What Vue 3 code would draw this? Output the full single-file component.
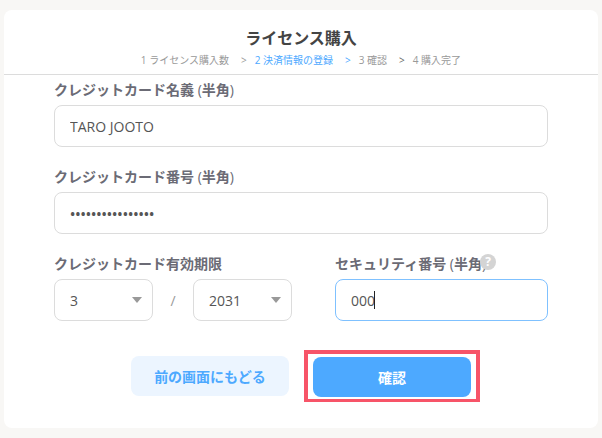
<script setup>
import { ref } from 'vue'

const steps = ['ライセンス購入数', '決済情報の登録', '確認', '購入完了']
const current = 1

const holder = ref('TARO JOOTO')
const number = ref('4242424242424242')
const month = ref('3')
const year = ref('2031')
const code = ref('000')

const months = Array.from({ length: 12 }, (_, i) => String(i + 1))
const years = Array.from({ length: 10 }, (_, i) => String(2024 + i))
</script>

<template>
  <main class="card">
    <header class="head">
      <h1 class="title">ライセンス購入</h1>
      <ol class="steps">
        <li
          v-for="(step, i) in steps"
          :key="step"
          class="step"
          :class="{ active: i === current }"
        >
          <span>{{ i + 1 }} {{ step }}</span>
          <span v-if="i < steps.length - 1" :class="{ last: i === 2 }">&gt;</span>
        </li>
      </ol>
    </header>

    <form class="form" @submit.prevent>
      <div class="field">
        <label class="label" for="holder">クレジットカード名義<span class="paren"> (</span>半角<span class="paren">)</span></label>
        <input id="holder" v-model="holder" class="control" type="text" />
      </div>

      <div class="field">
        <label class="label" for="number">クレジットカード番号<span class="paren"> (</span>半角<span class="paren">)</span></label>
        <input id="number" v-model="number" class="control masked" type="password" autocomplete="off" />
      </div>

      <div class="columns">
        <div class="field expiry">
          <label class="label" for="month">クレジットカード有効期限</label>
          <div class="selects">
            <div class="wrap">
              <select id="month" v-model="month" class="control">
                <option v-for="m in months" :key="m">{{ m }}</option>
              </select>
              <svg class="arrow" viewBox="0 0 10 6" aria-hidden="true"><path d="M0 0H10L5 6Z" /></svg>
            </div>
            <span class="slash">/</span>
            <div class="wrap">
              <select id="year" v-model="year" class="control" aria-label="有効期限の年">
                <option v-for="y in years" :key="y">{{ y }}</option>
              </select>
              <svg class="arrow" viewBox="0 0 10 6" aria-hidden="true"><path d="M0 0H10L5 6Z" /></svg>
            </div>
          </div>
        </div>

        <div class="field security">
          <label class="label" for="code">セキュリティ番号<span class="paren"> (</span>半角<span class="paren">)</span></label>
          <button class="help" type="button">?</button>
          <div class="wrap">
            <input id="code" v-model="code" class="control focused" type="text" />
            <span class="caret"></span>
          </div>
        </div>
      </div>

      <div class="actions">
        <button class="btn back" type="button">前の画面にもどる</button>
        <div class="marked">
          <button class="btn confirm" type="submit">確認</button>
        </div>
      </div>
    </form>
  </main>
</template>

<style>
body {
  background: #f8f7f5;
}
</style>

<style scoped>
.card,
.control,
.btn,
.help {
  font-family: "Open Sans", "Noto Sans CJK JP", sans-serif;
}
.card {
  margin: 10px 4px;
  background: #fff;
  border-radius: 8px;
  color: #6b6b75;
}
.head {
  padding: 16px 0 4px;
  border-bottom: 1px solid #dcdcdc;
  text-align: center;
}
.title {
  margin: 0;
  font-size: 16px;
  line-height: 24px;
  font-weight: 700;
  color: #444;
}
.steps {
  display: flex;
  justify-content: center;
  gap: 8px;
  margin: 0;
  padding: 0;
  list-style: none;
  font-size: 10px;
  line-height: 20px;
  color: #999;
}
.step {
  display: flex;
  gap: 12px;
}
.active {
  color: #4da9ff;
}
.last {
  color: #666;
}
.form {
  padding: 5px 50px 26px;
}
.field {
  display: flex;
  flex-direction: column;
  gap: 5px;
  margin-bottom: 20px;
}
.label {
  font-size: 14px;
  line-height: 20px;
  font-weight: 600;
  white-space: nowrap;
}
.paren {
  font-weight: 400;
}
.control {
  display: block;
  box-sizing: border-box;
  width: 100%;
  height: 42px;
  margin: 0;
  padding: 0 15px;
  border: 1px solid #dcdcdc;
  border-radius: 8px;
  background: #fff;
  color: #555;
  font-size: 14px;
  appearance: none;
  outline: none;
}
.masked {
  font-weight: 600;
}
.focused {
  border-color: #7fc1ff;
}
.columns {
  display: flex;
  gap: 43px;
}
.expiry {
  flex: 238 1 0;
}
.security {
  position: relative;
  flex: 213 1 0;
}
.selects {
  display: flex;
  align-items: center;
}
.wrap {
  position: relative;
  flex: 1;
}
.slash {
  width: 40px;
  text-align: center;
  font-size: 14px;
  color: #999;
}
.arrow {
  position: absolute;
  top: 18px;
  right: 11px;
  width: 10px;
  height: 6px;
  fill: #999;
  pointer-events: none;
}
.caret {
  position: absolute;
  top: 12px;
  left: 39px;
  width: 1px;
  height: 18px;
  background: #222;
}
.help {
  position: absolute;
  top: 0;
  left: 145px;
  width: 16px;
  height: 16px;
  padding: 0;
  border: 0;
  border-radius: 50%;
  background: #d4d4d4;
  color: #fff;
  font-size: 12px;
  line-height: 16px;
  font-weight: 700;
}
.actions {
  display: flex;
  justify-content: center;
  align-items: center;
  gap: 15px;
  margin-top: 9px;
  padding-right: 9px;
  padding-left: 18px;
}
.marked {
  padding: 3px 5px 2px;
  border: 4px solid #f75468;
  border-width: 4px 4px 3px;
}
.btn {
  display: block;
  width: 158px;
  height: 40px;
  padding: 0;
  border: 0;
  border-radius: 8px;
  font-size: 14px;
  font-weight: 700;
}
.back {
  background: #ecf5ff;
  color: #4da9ff;
}
.confirm {
  background: #4da9ff;
  color: #fff;
}
</style>
